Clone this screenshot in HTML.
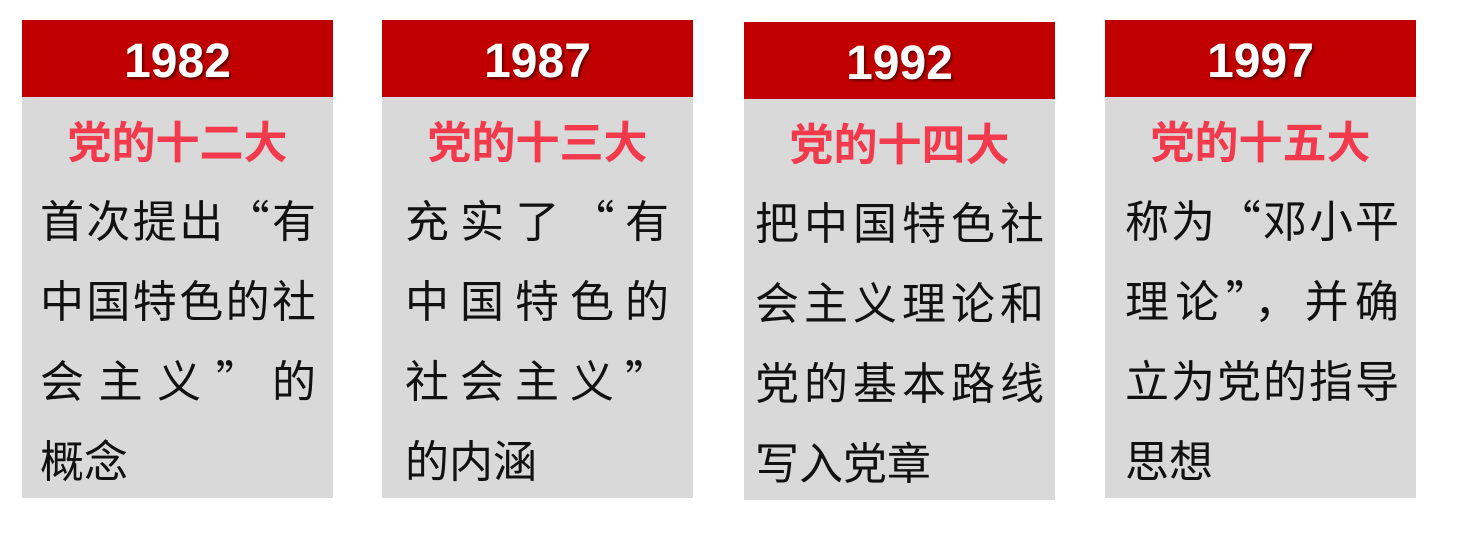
<!DOCTYPE html><html><head><meta charset="utf-8"><style>
body{margin:0;width:1460px;height:538px;background:#fff;position:relative;overflow:hidden;font-family:"Liberation Sans","Noto Sans CJK SC",sans-serif}
.c{position:absolute;width:311px;background:#d9d9d9}
.h{height:77px;background:#c00000;color:#fff;font-weight:bold;font-size:48px;text-align:center;line-height:84px;text-shadow:2px 2px 2px #600;font-family:"Liberation Sans",sans-serif}
.s{color:#f23a4c;font-weight:bold;font-size:44px;text-align:center;height:50px;line-height:50px;margin-top:17px;font-family:"Noto Sans CJK SC",sans-serif}
.l{position:absolute;font-size:44px;line-height:80px;height:80px;color:#111;white-space:nowrap;font-family:"Noto Sans CJK SC",sans-serif}
.j{text-align:justify;text-align-last:justify}
</style></head><body>
<div class="c" style="left:22px;top:20px;height:478px"><div class="h">1982</div><div class="s">党的十二大</div>
<div class="l j" style="left:18px;width:276px;top:158px">首次提出“有</div>
<div class="l j" style="left:18px;width:276px;top:238px">中国特色的社</div>
<div class="l j" style="left:18px;width:276px;top:318px">会 主 义 ” 的</div>
<div class="l" style="left:18px;top:398px">概念</div></div>
<div class="c" style="left:382px;top:20px;height:478px"><div class="h">1987</div><div class="s">党的十三大</div>
<div class="l j" style="left:23px;width:264px;top:158px">充 实 了 “ 有</div>
<div class="l j" style="left:23px;width:264px;top:238px">中国特色的</div>
<div class="l j" style="left:23px;width:264px;top:318px">社 会 主 义 ”</div>
<div class="l" style="left:23px;top:398px">的内涵</div></div>
<div class="c" style="left:744px;top:22px;height:478px"><div class="h">1992</div><div class="s">党的十四大</div>
<div class="l j" style="left:11px;width:289px;top:158px">把中国特色社</div>
<div class="l j" style="left:11px;width:289px;top:238px">会主义理论和</div>
<div class="l j" style="left:11px;width:289px;top:318px">党的基本路线</div>
<div class="l" style="left:11px;top:398px">写入党章</div></div>
<div class="c" style="left:1105px;top:20px;height:478px"><div class="h">1997</div><div class="s">党的十五大</div>
<div class="l j" style="left:20px;width:274px;top:158px">称为“邓小平</div>
<div class="l j" style="left:20px;width:274px;top:238px">理论”，并确</div>
<div class="l j" style="left:20px;width:274px;top:318px">立为党的指导</div>
<div class="l" style="left:20px;top:398px">思想</div></div>
</body></html>
